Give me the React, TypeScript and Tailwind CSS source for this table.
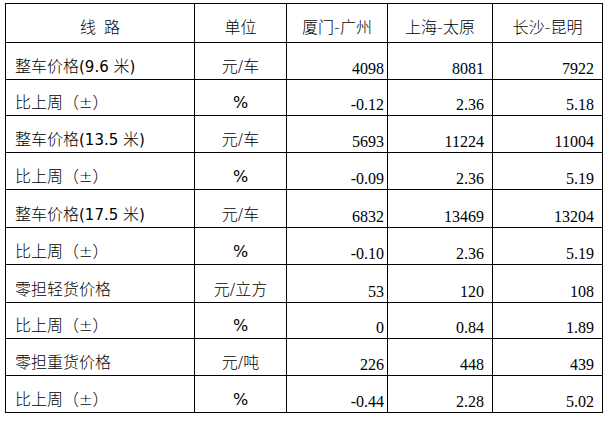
import React from "react";

const cjk = "font-['DejaVu_Sans','Noto_Sans_CJK_SC',sans-serif] font-light";
const serif = "font-['Liberation_Serif','Times_New_Roman',serif]";
const lat = "text-[15px] font-normal";

type Row = { label: React.ReactNode; unit: React.ReactNode; vals: string[]; h: string };

const pm = "比上周（±）";
const pct = <span className="font-normal">%</span>;

const rows: Row[] = [
  { label: <>整车价格<span className={lat}>(9.6&nbsp;</span>米<span className={lat}>)</span></>, unit: "元/车", vals: ["4098", "8081", "7922"], h: "h-[37px]" },
  { label: pm, unit: pct, vals: ["-0.12", "2.36", "5.18"], h: "h-[36px]" },
  { label: <>整车价格<span className={lat}>(13.5&nbsp;</span>米<span className={lat}>)</span></>, unit: "元/车", vals: ["5693", "11224", "11004"], h: "h-[37px]" },
  { label: pm, unit: pct, vals: ["-0.09", "2.36", "5.19"], h: "h-[37px]" },
  { label: <>整车价格<span className={lat}>(17.5&nbsp;</span>米<span className={lat}>)</span></>, unit: "元/车", vals: ["6832", "13469", "13204"], h: "h-[38px]" },
  { label: pm, unit: pct, vals: ["-0.10", "2.36", "5.19"], h: "h-[37px]" },
  { label: "零担轻货价格", unit: "元/立方", vals: ["53", "120", "108"], h: "h-[38px]" },
  { label: pm, unit: pct, vals: ["0", "0.84", "1.89"], h: "h-[36px]" },
  { label: "零担重货价格", unit: "元/吨", vals: ["226", "448", "439"], h: "h-[37px]" },
  { label: pm, unit: pct, vals: ["-0.44", "2.28", "5.02"], h: "h-[37px]" },
];

const grid = "grid grid-cols-[189px_92px_101px_105px_110px]";
const cell = "border-r border-b border-black flex items-end";

export default function App() {
  return (
    <div className="w-[607px] h-[430px] bg-white text-black overflow-hidden">
      <div className="ml-[5px] mt-[3px] w-[598px] border-t border-l border-black">
        <div className={`${grid} h-[39px] ${cjk} text-[16px] leading-[16px]`}>
          <div className={`${cell} justify-center pb-[6px]`}><span>线<span className="inline-block w-[8px]" />路</span></div>
          <div className={`${cell} justify-center pb-[6px]`}>单位</div>
          <div className={`${cell} justify-center pb-[6px]`}>厦门-广州</div>
          <div className={`${cell} justify-center pb-[6px]`}>上海-太原</div>
          <div className={`${cell} justify-center pb-[6px]`}>长沙-昆明</div>
        </div>
        {rows.map((r, i) => (
          <div key={i} className={`${grid} ${r.h}`}>
            <div className={`${cell} ${cjk} text-[16px] leading-[16px] pl-[9px] pb-[4px] whitespace-nowrap`}><span>{r.label}</span></div>
            <div className={`${cell} ${cjk} justify-center text-[16px] leading-[16px] pb-[4px]`}>{r.unit}</div>
            <div className={`${cell} ${serif} justify-end text-[16px] leading-[16px] pr-[3px] pb-[2px]`}>{r.vals[0]}</div>
            <div className={`${cell} ${serif} justify-end text-[16px] leading-[16px] pr-[8px] pb-[2px]`}>{r.vals[1]}</div>
            <div className={`${cell} ${serif} justify-end text-[16px] leading-[16px] pr-[8px] pb-[2px]`}>{r.vals[2]}</div>
          </div>
        ))}
      </div>
    </div>
  );
}
